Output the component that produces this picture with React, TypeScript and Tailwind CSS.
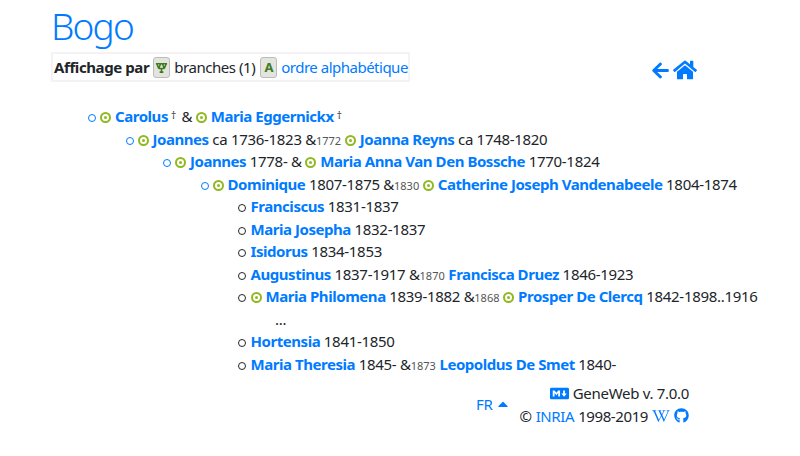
import React from "react";
import { FaArrowLeft, FaHome, FaGithub, FaMarkdown, FaWikipediaW, FaCaretUp } from "react-icons/fa";

const Open = () => <span className="inline-block w-[8px] h-[8px] rounded-full border-[1.5px] border-[#007bff] mr-[4px]" />;
const Closed = () => <span className="inline-block w-[8px] h-[8px] rounded-full border-[1.5px] border-[#212529] mr-[4.5px]" />;

const Sosa = () => (
  <span className="inline-flex items-center justify-center w-[11px] h-[11px] rounded-full border-2 border-[#90b81f] mr-[4px] align-[3px]">
    <span className="w-[3px] h-[3px] rounded-full bg-[#90b81f]" />
  </span>
);

const P = ({ children }: { children: React.ReactNode }) => (
  <a className="font-bold text-[#007bff] tracking-[-0.45px]">{children}</a>
);
const Y = ({ children }: { children: React.ReactNode }) => (
  <span className="text-[11px] text-[#555] tracking-normal">{children}</span>
);
const Dag = () => <sup className="text-[10px] text-[#333] ml-[3px] mr-[2px] top-[-3px]">†</sup>;

function Row({ children, className = "" }: { children: React.ReactNode; className?: string }) {
  return <div className={"h-[22.5px] whitespace-nowrap " + className}>{children}</div>;
}

export default function App() {
  return (
    <div className="w-[800px] h-[456px] bg-white text-[#212529] text-[15px] leading-[22.5px] tracking-[-0.3px] font-['Noto_Sans',sans-serif] overflow-hidden">
      <div className="pl-[51px]">
        <h1 className="pt-[4px] h-[52px] text-[37px] leading-[44px] font-light tracking-[-1.8px] text-[#007bff]">Bogo</h1>
        <div className="flex items-center justify-between w-[646px]">
          <div className="flex items-center h-[30px] border-2 border-[#f4f2f4] pl-[1px] pr-[1px] w-[359px] whitespace-nowrap">
            <b className="mr-[4px] tracking-[-0.4px]">Affichage par</b>
            <span className="shrink-0 flex items-center justify-center w-[17px] h-[21px] rounded-[3px] bg-[#e4e4de] border border-[#bbb] mr-[4px]">
              <svg viewBox="0 0 14 14" className="w-[13px] h-[13px]" fill="none" stroke="#3f7a1e" strokeWidth="1.7">
                <path d="M1 3h12M2 3l2 5M6 3l-2 5M8 3l2 5M12 3l-2 5M4 8h6M7 8v4M5 12h4" />
              </svg>
            </span>
            <span className="mr-[5px] tracking-[-0.45px]">branches (1)</span>
            <span className="shrink-0 flex items-center justify-center w-[17px] h-[21px] rounded-[3px] bg-[#e4e4de] border border-[#bbb] mr-[4px] text-[13px] font-bold text-[#3f7a1e]">A</span>
            <a className="text-[#007bff] tracking-[-0.5px]">ordre alphabétique</a>
          </div>
          <div className="flex items-center text-[#007bff] gap-[3px] mt-[6px]">
            <FaArrowLeft className="text-[19px]" />
            <FaHome className="text-[24px]" />
          </div>
        </div>
      </div>

      <div className="mt-[23px] pl-[88px] text-[#212529]">
        <Row><Open /><Sosa /><P>Carolus</P><Dag /> &amp; <Sosa /><P>Maria Eggernickx</P><Dag /></Row>
        <div className="pl-[37.5px]">
          <Row><Open /><Sosa /><P>Joannes</P> ca 1736-1823 &amp;<Y>1772</Y> <Sosa /><P>Joanna Reyns</P> ca 1748-1820</Row>
          <div className="pl-[37.5px]">
            <Row><Open /><Sosa /><P>Joannes</P> 1778- &amp; <Sosa /><P>Maria Anna Van Den Bossche</P> 1770-1824</Row>
            <div className="pl-[37.5px]">
              <Row><Open /><Sosa /><P>Dominique</P> 1807-1875 &amp;<Y>1830</Y> <Sosa /><P>Catherine Joseph Vandenabeele</P> 1804-1874</Row>
              <div className="pl-[37.5px]">
                <Row><Closed /><P>Franciscus</P> 1831-1837</Row>
                <Row><Closed /><P>Maria Josepha</P> 1832-1837</Row>
                <Row><Closed /><P>Isidorus</P> 1834-1853</Row>
                <Row><Closed /><P>Augustinus</P> 1837-1917 &amp;<Y>1870</Y> <P>Francisca Druez</P> 1846-1923</Row>
                <Row><Closed /><Sosa /><P>Maria Philomena</P> 1839-1882 &amp;<Y>1868</Y> <Sosa /><P>Prosper De Clercq</P> 1842-1898..1916</Row>
                <Row className="pl-[37px]">...</Row>
                <Row><Closed /><P>Hortensia</P> 1841-1850</Row>
                <Row><Closed /><P>Maria Theresia</P> 1845- &amp;<Y>1873</Y> <P>Leopoldus De Smet</P> 1840-</Row>
              </div>
            </div>
          </div>
        </div>
      </div>

      <div className="flex justify-end items-center mt-[7px] pr-[111px]">
        <a className="text-[#007bff] flex items-center mr-[9px] mt-[-1px]">FR<FaCaretUp className="text-[16px] ml-[2px]" /></a>
        <div className="text-right">
          <div className="flex items-center justify-end"><FaMarkdown className="text-[#007bff] text-[19px] mr-[4px]" />GeneWeb v. 7.0.0</div>
          <div className="flex items-center justify-end tracking-[-0.4px]">© <a className="text-[#007bff] mx-[4px]">INRIA</a> 1998-2019<FaWikipediaW className="text-[#007bff] text-[18px] mx-[4px]" /><FaGithub className="text-[#007bff] text-[15px]" /></div>
        </div>
      </div>
    </div>
  );
}
